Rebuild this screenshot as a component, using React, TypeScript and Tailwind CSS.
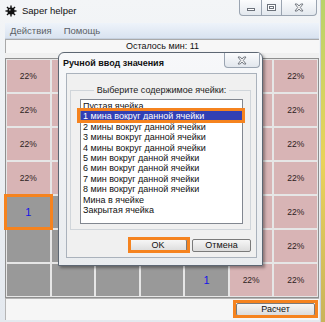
import React from "react";

type C = "p" | "g" | "o";
const rows: C[][] = [
  ["p", "p", "p", "p", "p", "p", "p"],
  ["p", "p", "p", "p", "p", "p", "p"],
  ["p", "p", "p", "p", "p", "p", "p"],
  ["p", "p", "p", "p", "p", "p", "p"],
  ["o", "g", "g", "g", "g", "p", "p"],
  ["g", "g", "g", "g", "g", "p", "p"],
  ["g", "g", "g", "g", "o", "p", "p"],
];

const items = [
  "Пустая ячейка",
  "1 мина вокруг данной ячейки",
  "2 мины вокруг данной ячейки",
  "3 мины вокруг данной ячейки",
  "4 мины вокруг данной ячейки",
  "5 мин вокруг данной ячейки",
  "6 мин вокруг данной ячейки",
  "7 мин вокруг данной ячейки",
  "8 мин вокруг данной ячейки",
  "Мина в ячейке",
  "Закрытая ячейка",
];

function MineIcon() {
  return (
    <svg width="12" height="12" viewBox="0 0 12 12">
      <g stroke="#111" strokeWidth="1.4">
        <line x1="6" y1="0.5" x2="6" y2="11.5" />
        <line x1="0.5" y1="6" x2="11.5" y2="6" />
        <line x1="2" y1="2" x2="10" y2="10" />
        <line x1="10" y1="2" x2="2" y2="10" />
      </g>
      <circle cx="6" cy="6" r="3.6" fill="#111" />
      <circle cx="4.8" cy="4.8" r="0.9" fill="#bbb" />
    </svg>
  );
}

function XIcon() {
  return (
    <svg width="10" height="9" viewBox="0 0 10 9">
      <path
        d="M1 1 L3.2 1 L5 3 L6.8 1 L9 1 L6.3 4.5 L9 8 L6.8 8 L5 6 L3.2 8 L1 8 L3.7 4.5 Z"
        fill="#f4f4f4"
        stroke="#6a6f78"
        strokeWidth="0.9"
        strokeLinejoin="round"
      />
    </svg>
  );
}

function Btn({ label, w }: { label: string; w: string }) {
  return (
    <div
      className={`${w} h-[13px] flex items-center justify-center border border-[#7a7a7a] rounded-[2px] bg-gradient-to-b from-[#f6f6f6] to-[#dcdcdc] text-[9px] leading-none text-[#111]`}
    >
      {label}
    </div>
  );
}

export default function App() {
  return (
    <div className="relative w-[325px] h-[322px] overflow-hidden bg-gradient-to-b from-[#b7d36a] via-[#e9d35a] to-[#c9b45a] font-['Liberation_Sans',Arial,sans-serif]">
      {/* main window */}
      <div className="w-[321px] h-[322px] flex flex-col bg-gradient-to-b from-[#f3f5f7] to-[#e4e9ef] border-r border-[#c9d0d8]">
        {/* title bar */}
        <div className="h-[23px] flex items-start">
          <div className="flex items-center pl-[5px] pt-[5px] gap-[5px]">
            <MineIcon />
            <span className="text-[9.5px] leading-none text-[#111]">Saper helper</span>
          </div>
          <div className="ml-auto mr-[3px] flex h-[16px] border border-t-0 border-[#9aa4b1] rounded-b-[4px] bg-gradient-to-b from-[#fbfcfd] to-[#e3e8ee] overflow-hidden">
            <div className="w-[22px] flex items-center justify-center border-r border-[#9aa4b1]">
              <div className="w-[8px] h-[3px] border border-[#6c727b] bg-white mt-[3px]" />
            </div>
            <div className="w-[20px] flex items-center justify-center border-r border-[#9aa4b1]">
              <div className="w-[9px] h-[7px] border border-[#6c727b] bg-white flex items-center justify-center">
                <div className="w-[5px] h-[3px] border border-[#6c727b]" />
              </div>
            </div>
            <div className="w-[34px] flex items-center justify-center">
              <XIcon />
            </div>
          </div>
        </div>
        {/* client */}
        <div className="ml-[5px] mr-[1px] mb-[2px] flex-1 flex flex-col bg-[#f0f0f0]">
          {/* menu */}
          <div className="h-[16px] flex items-center gap-[12px] pl-[5px] bg-gradient-to-b from-[#eef3fa] to-[#d9e3f0] border-b border-[#c6d1df]">
            <span className="text-[9.5px] leading-none text-[#5b5f66]">Действия</span>
            <span className="text-[9.5px] leading-none text-[#5b5f66]">Помощь</span>
          </div>
          {/* status */}
          <div className="h-[14px] flex items-center justify-center bg-[#f7f7f7] border-t border-l border-[#a9a9a9] text-[9px] leading-none text-[#111]">
            Осталось мин: 11
          </div>
          <div className="h-[5px]" />
          {/* grid */}
          <div className="h-[240px] border border-[#8f8f8f] p-[1px] bg-[#e6e6e6]">
            <div className="grid grid-cols-7 grid-rows-7 gap-[2px] h-full">
              {rows.flatMap((r, ri) =>
                r.map((c, ci) => (
                  <div
                    key={`${ri}-${ci}`}
                    className={
                      c === "p"
                        ? "bg-[#d8b4b5] flex items-center justify-center text-[8.5px] text-[#2e2222]"
                        : "bg-[#999999] flex items-center justify-center text-[11px] text-[#1515e6]"
                    }
                  >
                    {c === "p" ? "22%" : c === "o" ? "1" : ""}
                  </div>
                ))
              )}
            </div>
          </div>
          {/* bottom bar */}
          <div className="flex-1 flex items-center justify-end pr-[4px] bg-[#f6f6f6] border-t border-l border-[#b5b5b5]">
            <Btn label="Расчет" w="w-[79px]" />
          </div>
        </div>
      </div>

      {/* dialog */}
      <div className="absolute left-[58px] top-[52px] w-[205px] h-[214px] flex flex-col border border-[#5d6773] rounded-t-[6px] bg-gradient-to-b from-[#f7f8fa] to-[#e9ecef] shadow-[2px_2px_3px_rgba(0,0,0,0.35)]">
        <div className="h-[20px] flex items-start">
          <span className="pl-[4px] pt-[6px] text-[9px] leading-none font-bold text-[#111]">
            Ручной ввод значения
          </span>
          <div className="ml-auto mr-[2px] w-[36px] h-[15px] flex items-center justify-center border border-t-0 border-[#9aa4b1] rounded-b-[4px] bg-gradient-to-b from-[#fbfcfd] to-[#e2e7ed]">
            <XIcon />
          </div>
        </div>
        <div className="ml-[7px] mr-[5px] mb-[7px] flex-1 flex flex-col border border-[#aab2bc] bg-[#f0f0f0] pt-[10px] pl-[3px] pr-[5px]">
          <fieldset className="h-[146px] border border-[#d0d5da] pl-[9px] pr-[7px]">
            <legend className="mx-auto px-[3px] text-[9px] leading-[12px] text-[#222]">
              Выберите содержимое ячейки:
            </legend>
            <div className="mt-[3px] h-[125px] border border-[#828790] bg-white pt-[1px]">
              {items.map((t, i) => (
                <div
                  key={i}
                  className={
                    i === 1
                      ? "h-[10.4px] leading-[10.4px] text-[9px] pl-[2px] bg-[#3240b4] text-white whitespace-nowrap"
                      : "h-[10.4px] leading-[10.4px] text-[9px] pl-[2px] text-[#111] whitespace-nowrap"
                  }
                >
                  {t}
                </div>
              ))}
            </div>
          </fieldset>
          <div className="mt-[9px] flex justify-end gap-[5px] pr-0">
            <Btn label="OK" w="w-[58px]" />
            <Btn label="Отмена" w="w-[59px]" />
          </div>
        </div>
      </div>

      {/* orange annotation boxes */}
      <div className="absolute left-[77px] top-[108px] w-[168px] h-[15px] border-[3px] border-[#f5831f]" />
      <div className="absolute left-[4px] top-[194px] w-[49px] h-[36px] border-[3px] border-[#f5831f]" />
      <div className="absolute left-[128px] top-[237px] w-[62px] h-[16px] border-[3px] border-[#f5831f]" />
      <div className="absolute left-[233px] top-[300px] w-[85px] h-[18px] border-[3px] border-[#f5831f]" />
    </div>
  );
}
